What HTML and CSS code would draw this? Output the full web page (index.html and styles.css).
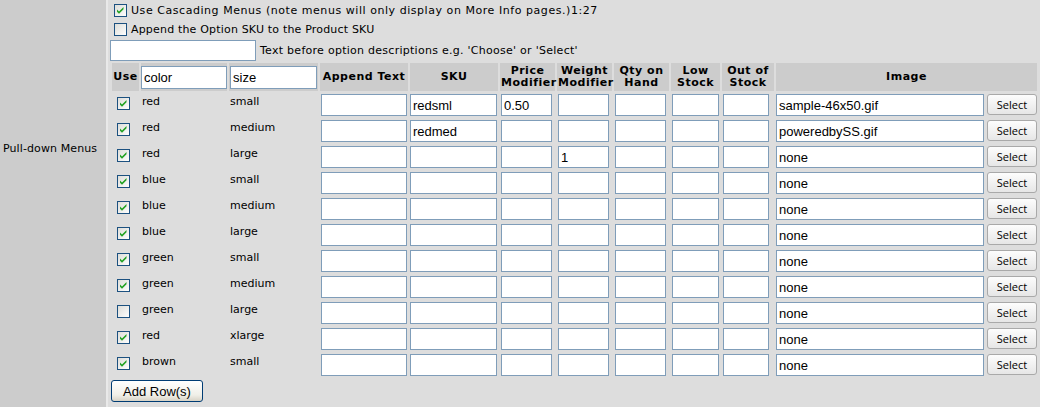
FILE: index.html
```html
<!DOCTYPE html>
<html>
<head>
<meta charset="utf-8">
<link rel="stylesheet" href="styles.css">
</head>
<body>
<svg class="defs" width="0" height="0">
  <defs>
    <linearGradient id="cbg" x1="0" y1="0" x2="1" y2="1">
      <stop offset="0" stop-color="#dcdcd7"/>
      <stop offset="1" stop-color="#ffffff"/>
    </linearGradient>
  </defs>
</svg>
<div class="page">
  <div class="label">Pull-down Menus</div>
  <div class="content">
    <div class="opt">
      <svg class="cb" width="13" height="13" viewBox="0 0 13 13"><rect x="0.5" y="0.5" width="12" height="12" fill="url(#cbg)" stroke="#1c5180"/><path d="M3 5.5 L5 7.5 L9.5 3 L9.5 5.2 L5 9.7 L3 7.7 Z" fill="#21a121"/></svg>
      <span class="t-cascade">Use Cascading Menus (note menus will only display on More Info pages.)1:27</span>
    </div>
    <div class="opt">
      <svg class="cb" width="13" height="13" viewBox="0 0 13 13"><rect x="0.5" y="0.5" width="12" height="12" fill="url(#cbg)" stroke="#1c5180"/></svg>
      <span class="t-append">Append the Option SKU to the Product SKU</span>
    </div>
    <div class="opt-input">
      <input class="prefix" type="text" value="">
      <span class="t-prefix">Text before option descriptions e.g. 'Choose' or 'Select'</span>
    </div>
    <table class="opts">
      <colgroup>
        <col class="c-use"><col class="c-color"><col class="c-size"><col class="c-app"><col class="c-sku">
        <col class="c-num"><col class="c-num"><col class="c-num"><col class="c-low"><col class="c-out">
        <col class="c-img"><col class="c-sel">
      </colgroup>
      <thead>
        <tr>
          <th>Use</th>
          <th class="hin"><input class="in-color" type="text" value="color"></th>
          <th class="hin"><input class="in-size" type="text" value="size"></th>
          <th>Append Text</th>
          <th>SKU</th>
          <th>Price Modifier</th>
          <th>Weight Modifier</th>
          <th>Qty on Hand</th>
          <th>Low Stock</th>
          <th>Out of Stock</th>
          <th colspan="2">Image</th>
        </tr>
      </thead>
      <tbody id="rows"></tbody>
    </table>
    <button class="add" type="button">Add Row(s)</button>
  </div>
</div>
<script>
  var data = [
    [1,"red","small","","redsml","0.50","","sample-46x50.gif"],
    [1,"red","medium","","redmed","","","poweredbySS.gif"],
    [1,"red","large","","","","1","none"],
    [1,"blue","small","","","","","none"],
    [1,"blue","medium","","","","","none"],
    [1,"blue","large","","","","","none"],
    [1,"green","small","","","","","none"],
    [1,"green","medium","","","","","none"],
    [0,"green","large","","","","","none"],
    [1,"red","xlarge","","","","","none"],
    [1,"brown","small","","","","","none"]
  ];
  var cbOn = '<svg class="cb" width="13" height="13" viewBox="0 0 13 13"><rect x="0.5" y="0.5" width="12" height="12" fill="url(#cbg)" stroke="#1c5180"/><path d="M3 5.5 L5 7.5 L9.5 3 L9.5 5.2 L5 9.7 L3 7.7 Z" fill="#21a121"/></svg>';
  var cbOff = '<svg class="cb" width="13" height="13" viewBox="0 0 13 13"><rect x="0.5" y="0.5" width="12" height="12" fill="url(#cbg)" stroke="#1c5180"/></svg>';
  var html = "";
  data.forEach(function (r) {
    html += '<tr>' +
      '<td>' + (r[0] ? cbOn : cbOff) + '</td>' +
      '<td class="txt">' + r[1] + '</td>' +
      '<td class="txt">' + r[2] + '</td>' +
      '<td><input class="in-app" type="text" value="' + r[3] + '"></td>' +
      '<td><input class="in-sku" type="text" value="' + r[4] + '"></td>' +
      '<td><input class="in-num" type="text" value="' + r[5] + '"></td>' +
      '<td><input class="in-num" type="text" value="' + r[6] + '"></td>' +
      '<td><input class="in-num" type="text" value=""></td>' +
      '<td><input class="in-low" type="text" value=""></td>' +
      '<td><input class="in-out" type="text" value=""></td>' +
      '<td><input class="in-img" type="text" value="' + r[7] + '"></td>' +
      '<td><button class="sel" type="button">Select</button></td>' +
      '</tr>';
  });
  document.getElementById("rows").innerHTML = html;
</script>
</body>
</html>
```

FILE: styles.css
```css
html, body {
  margin: 0;
  padding: 0;
  background: #dddddd;
}
body {
  font-family: "DejaVu Sans", Verdana, sans-serif;
  font-size: 11px;
  color: #000;
}
.defs {
  position: absolute;
  width: 0;
  height: 0;
}
.page {
  display: flex;
  min-height: 407px;
}
.label {
  width: 103px;
  flex: none;
  background: #cccccc;
  border-right: 2px solid #e9e9e9;
  padding: 142px 0 0 3px;
  line-height: 13px;
  letter-spacing: 0.1px;
}
.content {
  flex: 1;
  background: #dddddd;
  padding: 1px 0 0 2px;
}
.opt {
  display: flex;
  align-items: center;
  height: 19px;
  white-space: nowrap;
}
.t-cascade { letter-spacing: 0.55px; }
.t-append { letter-spacing: 0.18px; }
.t-prefix { letter-spacing: 0.27px; }
.cb {
  display: block;
  flex: none;
  margin: 3px 4px 3px 4px;
}
.opt-input {
  display: flex;
  align-items: center;
  height: 21px;
  margin-top: 1px;
}
.opt-input span {
  margin-left: 4px;
}
input[type="text"] {
  box-sizing: border-box;
  height: 22px;
  margin: 0;
  border: 1px solid #7f9db9;
  background: #fff;
  padding: 1px 2px;
  font-family: "Liberation Sans", Arial, sans-serif;
  font-size: 13px;
  color: #000;
  display: block;
}
.prefix {
  width: 146px;
  height: 21px !important;
}
.opts {
  border-spacing: 2px;
  table-layout: fixed;
  width: 929px;
}
.opts th, .opts td {
  padding: 1px;
  box-sizing: border-box;
}
.opts th {
  background: #cccccc;
  height: 28px;
  font-weight: bold;
  font-size: 11px;
  line-height: 12px;
  letter-spacing: 0.5px;
  text-align: center;
  vertical-align: middle;
}
.opts th.hin {
  padding: 0;
}
.opts td {
  vertical-align: top;
  height: 24px;
}
.opts td.txt {
  padding-top: 2px;
  line-height: 13px;
}
.c-use { width: 27px; }
.c-color { width: 86px; }
.c-size { width: 89px; }
.c-app { width: 88px; }
.c-sku { width: 88px; }
.c-num { width: 55px; }
.c-low { width: 49px; }
.c-out { width: 52px; }
.c-img { width: 209px; }
.c-sel { width: 50px; }
.in-color { width: 86px; height: 23px !important; }
.in-size { width: 87px; height: 23px !important; margin-left: 1px !important; }
.in-app { width: 86px; }
.in-sku { width: 87px; margin-left: -1px !important; }
.in-num { width: 51px; }
.in-low { width: 47px; }
.in-out { width: 46px; }
.in-img { width: 208px; margin-left: -1px !important; }
.sel {
  display: block;
  width: 50px;
  height: 21px;
  margin: 0 0 0 -1px;
  padding: 0;
  border: 1px solid #a9a9a9;
  border-radius: 3px;
  background: linear-gradient(#fdfdfd, #e6e6e6);
  font-family: "Open Sans", "Liberation Sans", sans-serif;
  font-size: 11px;
  color: #000;
}
.add {
  display: block;
  width: 92px;
  height: 22px;
  margin: 1px 0 0 1px;
  padding: 0;
  border: 1px solid #003c74;
  border-radius: 3px;
  background: linear-gradient(#ffffff, #f0efe8 70%, #d8d3c6);
  font-family: "Liberation Sans", Arial, sans-serif;
  font-size: 13px;
  color: #000;
}
```
